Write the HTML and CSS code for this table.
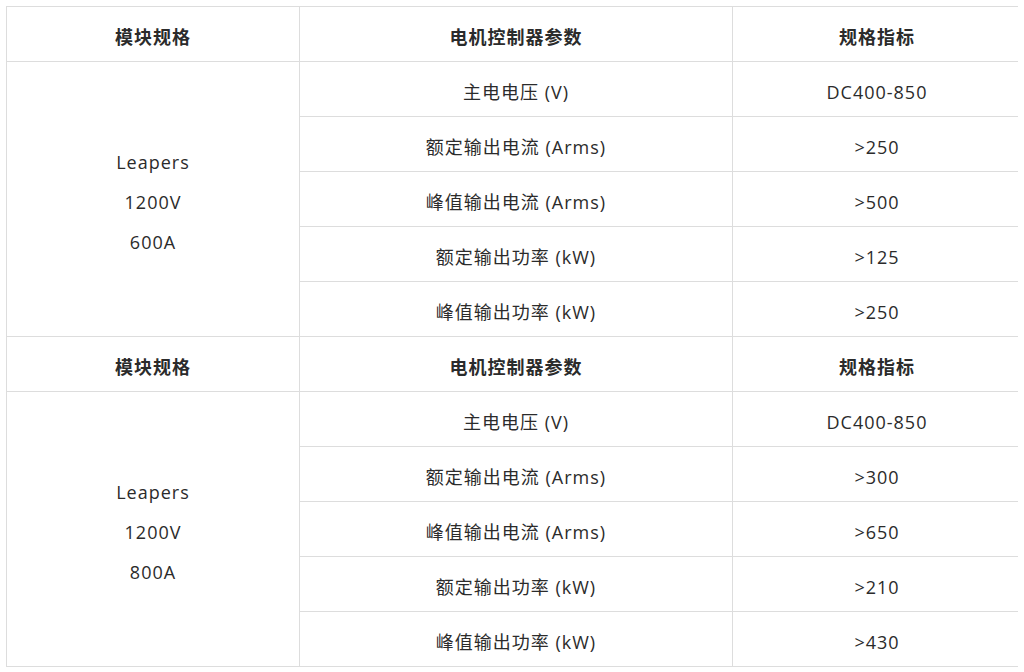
FILE: index.html
```html
<!DOCTYPE html>
<html lang="zh-CN">
<head>
<meta charset="utf-8">
<title>Leapers 规格</title>
<link rel="stylesheet" href="styles.css">
</head>
<body>
<table class="spec">
  <colgroup>
    <col class="c1">
    <col class="c2">
    <col class="c3">
  </colgroup>
  <tbody>
    <tr class="head">
      <th>模块规格</th>
      <th>电机控制器参数</th>
      <th>规格指标</th>
    </tr>
    <tr>
      <td rowspan="5" class="module">Leapers<br>1200V<br>600A</td>
      <td>主电电压 (V)</td>
      <td>DC400-850</td>
    </tr>
    <tr><td>额定输出电流 (Arms)</td><td>&gt;250</td></tr>
    <tr><td>峰值输出电流 (Arms)</td><td>&gt;500</td></tr>
    <tr><td>额定输出功率 (kW)</td><td>&gt;125</td></tr>
    <tr><td>峰值输出功率 (kW)</td><td>&gt;250</td></tr>
    <tr class="head">
      <th>模块规格</th>
      <th>电机控制器参数</th>
      <th>规格指标</th>
    </tr>
    <tr>
      <td rowspan="5" class="module">Leapers<br>1200V<br>800A</td>
      <td>主电电压 (V)</td>
      <td>DC400-850</td>
    </tr>
    <tr><td>额定输出电流 (Arms)</td><td>&gt;300</td></tr>
    <tr><td>峰值输出电流 (Arms)</td><td>&gt;650</td></tr>
    <tr><td>额定输出功率 (kW)</td><td>&gt;210</td></tr>
    <tr><td>峰值输出功率 (kW)</td><td>&gt;430</td></tr>
  </tbody>
</table>
</body>
</html>
```
FILE: styles.css
```css
html, body {
  background: #ffffff;
}
body {
  margin: 6px;
  font-family: "Open Sans", "Noto Sans CJK SC", sans-serif;
  color: #2b2b2b;
}
.spec {
  width: 1015px;
  border-collapse: collapse;
  table-layout: fixed;
  font-size: 18px;
  letter-spacing: 1px;
}
.c1 { width: 293px; }
.c2 { width: 433px; }
.c3 { width: 289px; }
.spec th,
.spec td {
  border: 1px solid #dddddd;
  height: 55px;
  padding: 5px 8px 0;
  box-sizing: border-box;
  text-align: center;
  vertical-align: middle;
  line-height: 24px;
}
.spec th {
  font-weight: bold;
}
.spec td.module {
  line-height: 40px;
}
```
